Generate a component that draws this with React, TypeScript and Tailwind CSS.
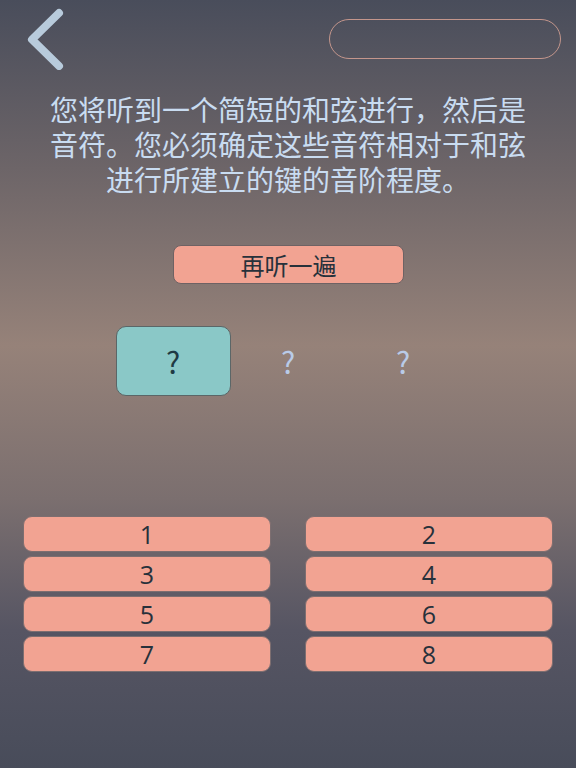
export default function App() {
  const numbers = [1, 2, 3, 4, 5, 6, 7, 8]

  return (
    <div
      className="relative w-[576px] h-[768px] overflow-hidden bg-[linear-gradient(to_bottom,#494d5b_0%,#6d6568_22%,#968279_45%,#7b6f6f_65%,#565563_82%,#484c5a_100%)]"
      style={{ fontFamily: '"Noto Sans CJK SC", "Liberation Sans", sans-serif' }}
    >
      {/* Header */}
      <div className="flex items-start justify-between pl-[24px] pr-[15px] pt-[8px]">
        <button className="w-[42px] h-[62px]">
          <svg width="42" height="62" viewBox="0 0 42 62" fill="none">
            <path d="M35 5 L8 31.5 L35 58" stroke="#b8cbdc" strokeWidth="8" strokeLinecap="round" strokeLinejoin="round" />
          </svg>
        </button>
        <div className="mt-[11px] w-[232px] h-[40px] rounded-full border border-[#c4968c]" />
      </div>

      {/* Instructions */}
      <p className="mx-auto mt-[22px] w-[480px] text-center text-[28px] leading-[35px] text-[#c9dcf1]">
        您将听到一个简短的和弦进行，然后是音符。您必须确定这些音符相对于和弦进行所建立的键的音阶程度。
      </p>

      {/* Replay */}
      <div className="flex justify-center mt-[48px] pl-[1px]">
        <button className="w-[231px] h-[39px] rounded-[8px] bg-[#f2a392] border border-[#6e6264] text-[24px] leading-none text-[#27313b]">
          再听一遍
        </button>
      </div>

      {/* Answer slots */}
      <div className="flex justify-center mt-[42px] pl-[1px]">
        <div className="flex w-[346px]">
          <div className="w-[115px] h-[70px] rounded-[10px] bg-[#8ac8c7] border border-[#5b6667] flex items-center justify-center text-[30px] text-[#1f3a44]">
            ?
          </div>
          <div className="w-[115px] h-[70px] flex items-center justify-center text-[30px] text-[#b9cbe8]">?</div>
          <div className="w-[115px] h-[70px] flex items-center justify-center text-[30px] text-[#b9cbe8]">?</div>
        </div>
      </div>

      {/* Number pad */}
      <div className="grid grid-cols-2 gap-x-[34px] gap-y-[4px] px-[23px] mt-[120px]">
        {numbers.map((n) => (
          <button
            key={n}
            className="h-[36px] rounded-[9px] bg-[#f2a392] border border-[#7d6e70] text-[25px] leading-none text-[#27313b]"
            style={{ fontFamily: '"Open Sans", "Liberation Sans", sans-serif' }}
          >
            {n}
          </button>
        ))}
      </div>
    </div>
  )
}
